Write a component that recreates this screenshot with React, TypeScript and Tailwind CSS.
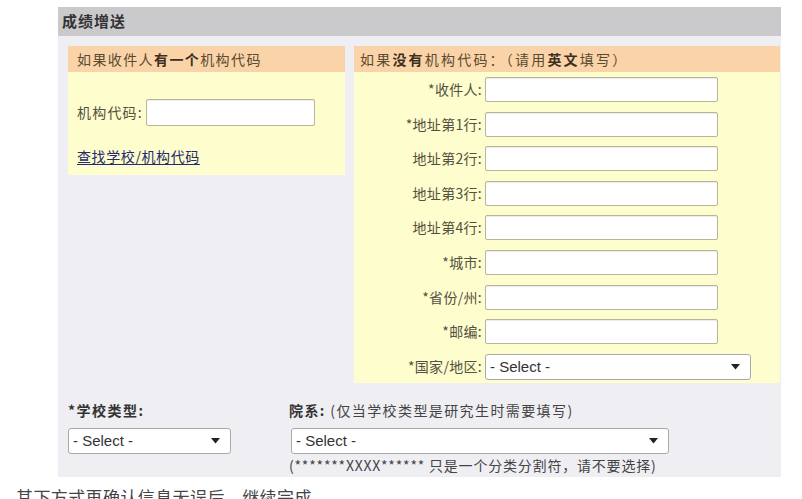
const font = { fontFamily: '"Noto Sans CJK SC", "Liberation Sans", sans-serif' };

const rows = [
  { label: "*收件人:" },
  { label: "*地址第1行:" },
  { label: "地址第2行:" },
  { label: "地址第3行:" },
  { label: "地址第4行:" },
  { label: "*城市:" },
  { label: "*省份/州:" },
  { label: "*邮编:" },
];

function TextBox({ className = "" }: { className?: string }) {
  return (
    <div
      className={`h-[25px] bg-white border border-[#b9b59a] rounded-[2px] shadow-[inset_0_1px_1px_rgba(0,0,0,0.08)] ${className}`}
    />
  );
}

function SelectBox({ className = "" }: { className?: string }) {
  return (
    <div
      className={`h-[26px] flex items-center justify-between bg-white border border-[#a9a9a9] rounded-[3px] pl-[4px] pr-[10px] ${className}`}
    >
      <span className="text-[15px] text-[#333]" style={{ fontFamily: '"Liberation Sans", sans-serif' }}>
        - Select -
      </span>
      <svg width="9" height="6" viewBox="0 0 9 6">
        <path d="M0 0 L9 0 L4.5 5.5 Z" fill="#222" />
      </svg>
    </div>
  );
}

export default function App() {
  return (
    <div className="w-[802px] h-[499px] bg-white overflow-hidden" style={font}>
      <div className="ml-[58px] mt-[7px] w-[723px]">
        {/* section title */}
        <div className="h-[29px] bg-[#cacacd] flex items-center pl-[4px]">
          <span className="text-[15px] tracking-[1px] font-bold text-[#333]">成绩增送</span>
        </div>

        <div className="bg-[#efeef3] h-[441px] pt-[10px] pl-[10px]">
          <div className="flex gap-[9px] items-start">
            {/* has institution code */}
            <div className="w-[277px]">
              <div className="h-[26px] bg-[#fad4a8] flex items-center pl-[9px] text-[14px] tracking-[1.4px] text-[#5a4a30]">
                如果收件人<span className="font-bold text-[#3d3020]">有一个</span>机构代码
              </div>
              <div className="h-[103px] bg-[#fdfdcd] pl-[9px] pt-[27px]">
                <div className="flex items-center gap-[3px]">
                  <span className="text-[14px] tracking-[1.2px] text-[#555040]">机构代码:</span>
                  <TextBox className="w-[169px] h-[27px]" />
                </div>
                <a href="#" className="block mt-[20px] text-[14px] tracking-[0.6px] text-[#262a6e] underline underline-offset-2">
                  查找学校/机构代码
                </a>
              </div>
            </div>

            {/* no institution code */}
            <div className="w-[426px]">
              <div className="h-[26px] bg-[#fad4a8] flex items-center pl-[6px] text-[14px] tracking-[2.2px] text-[#5a4a30]">
                如果<span className="font-bold text-[#3d3020]">没有</span>机构代码：（请用<span className="font-bold text-[#3d3020]">英文</span>填写）
              </div>
              <div className="h-[311px] bg-[#fdfdcd] pt-[5px] flex flex-col gap-[9.6px]">
                {rows.map((r) => (
                  <div key={r.label} className="flex items-center">
                    <span className="w-[131px] text-right pr-[3px] text-[14px] tracking-[0.3px] text-[#555040]">{r.label}</span>
                    <TextBox className="w-[233px]" />
                  </div>
                ))}
                <div className="flex items-center">
                  <span className="w-[131px] text-right pr-[3px] text-[14px] tracking-[0.3px] text-[#555040]">*国家/地区:</span>
                  <SelectBox className="w-[266px]" />
                </div>
              </div>
            </div>
          </div>

          {/* school type / department */}
          <div className="flex mt-[17px]">
            <div className="w-[221px]">
              <div className="text-[14px] tracking-[1.5px] font-bold text-[#333]">*学校类型:</div>
              <SelectBox className="w-[163px] mt-[7px]" />
            </div>
            <div>
              <div className="text-[14px] tracking-[1.4px] text-[#444]">
                <span className="font-bold text-[#333]">院系:</span> (仅当学校类型是研究生时需要填写)
              </div>
              <SelectBox className="w-[378px] mt-[7px] ml-[2px]" />
              <div className="mt-[3px] text-[14px] tracking-[0.8px] text-[#444] leading-[17px]">
                (*******XXXX****** 只是一个分类分割符，请不要选择)
              </div>
            </div>
          </div>
        </div>
      </div>

      <div className="mt-[10px] pl-[16px] text-[17px] tracking-[0.4px] text-[#444] leading-[20px]">
        其下方式再确认信息无误后，继续完成。
      </div>
    </div>
  );
}
